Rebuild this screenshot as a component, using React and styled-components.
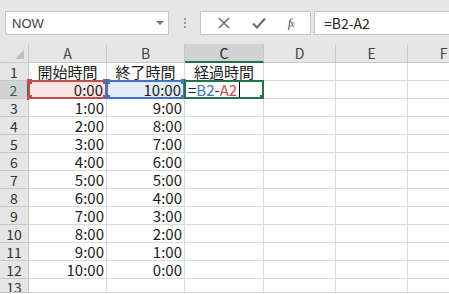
import React from 'react';
import styled, { createGlobalStyle } from 'styled-components';

const GlobalStyle = createGlobalStyle`
  html, body {
    margin: 0;
    padding: 0;
    background: #ffffff;
    overflow: hidden;
  }
  body {
    font-family: "Noto Sans CJK JP", "Noto Sans", sans-serif;
  }
`;

const Window = styled.div`
  width: 449px;
  height: 294px;
  overflow: hidden;
  background: #ffffff;
`;

const Toolbar = styled.div`
  height: 44px;
  background: #e6e6e6;
  display: flex;
  align-items: flex-start;
  padding: 11px 0 0 5px;
  box-sizing: border-box;
`;

const NameBox = styled.div`
  width: 164px;
  height: 24px;
  box-sizing: border-box;
  background: #fff;
  border: 1px solid #c6c6c6;
  display: flex;
  align-items: center;
  justify-content: space-between;
  padding: 0 4px 0 6px;
  font-family: "Liberation Sans", Arial, sans-serif;
  font-size: 13px;
  color: #3c3c3c;
`;

const Arrow = styled.span`
  width: 0;
  height: 0;
  border-left: 4px solid transparent;
  border-right: 4px solid transparent;
  border-top: 4px solid #777;
`;

const Grip = styled.div`
  width: 31px;
  height: 24px;
  display: flex;
  flex-direction: column;
  align-items: center;
  justify-content: center;
  gap: 2px;
  & > span {
    width: 2px;
    height: 2px;
    background: #9a9a9a;
  }
`;

const ActionBox = styled.div`
  width: 111px;
  height: 24px;
  box-sizing: border-box;
  background: #fff;
  border: 1px solid #c6c6c6;
  display: flex;
  align-items: center;
  justify-content: space-around;
  padding: 0 6px;
`;

const Fx = styled.span`
  font-family: "Liberation Serif", serif;
  font-style: italic;
  font-size: 13px;
  color: #555;
  letter-spacing: -1px;
  & > small {
    font-size: 10px;
  }
`;

const FormulaBox = styled.div`
  flex: 1;
  height: 24px;
  margin-left: 3px;
  box-sizing: border-box;
  background: #fff;
  border: 1px solid #c6c6c6;
  border-right: none;
  display: flex;
  align-items: center;
  padding-left: 9px;
  font-family: "Noto Sans CJK JP", sans-serif;
  font-size: 14px;
  color: #222;
`;

const Sheet = styled.div`
  display: grid;
  grid-template-columns: 29px 78px 78px 79px 72px 72px 72px;
  grid-template-rows: 19px repeat(12, 18px) 14px;
`;

const Corner = styled.div`
  background: #e6e6e6;
  border-right: 1px solid #c8c8c8;
  border-bottom: 1px solid #c8c8c8;
  box-sizing: border-box;
  position: relative;
  &::after {
    content: '';
    position: absolute;
    right: 4px;
    bottom: 3px;
    width: 0;
    height: 0;
    border-left: 9px solid transparent;
    border-bottom: 9px solid #bdbdbd;
  }
`;

const ColHead = styled.div`
  background: ${p => (p.active ? '#d2d2d2' : '#e6e6e6')};
  border-right: 1px solid #c8c8c8;
  border-bottom: ${p => (p.active ? '2px solid #217346' : '1px solid #c8c8c8')};
  box-sizing: border-box;
  display: flex;
  align-items: center;
  justify-content: center;
  font-size: 14px;
  color: ${p => (p.active ? '#262626' : '#444')};
  line-height: 16px;
  overflow: hidden;
`;

const RowHead = styled.div`
  background: ${p => (p.active ? '#d2d2d2' : '#e6e6e6')};
  border-right: ${p => (p.active ? '2px solid #217346' : '1px solid #c8c8c8')};
  border-bottom: 1px solid #c8c8c8;
  box-sizing: border-box;
  display: flex;
  align-items: ${p => (p.last ? 'flex-start' : 'center')};
  justify-content: center;
  font-size: 14px;
  color: ${p => (p.active ? '#2f5f45' : '#333')};
  line-height: 16px;
  overflow: hidden;
`;

const Cell = styled.div`
  position: relative;
  box-sizing: border-box;
  border-right: 1px solid #d9d9d9;
  border-bottom: 1px solid #d9d9d9;
  background: ${p => p.fill || '#fff'};
  display: flex;
  align-items: center;
  justify-content: ${p => (p.align === 'right' ? 'flex-end' : p.align === 'center' ? 'center' : 'flex-start')};
  padding: 0 2px;
  font-size: 15px;
  color: #1a1a1a;
  line-height: 16px;
  white-space: nowrap;
  ${p =>
    p.frame &&
    `
    border: 2px solid ${p.frame};
    margin: -1px 0 0 -1px;
    width: calc(100% + 1px);
    height: calc(100% + 1px);
  `}
`;

const Handle = styled.span`
  position: absolute;
  width: 5px;
  height: 5px;
  background: ${p => p.color};
  ${p => (p.top ? 'top: -3px;' : 'bottom: -3px;')}
  ${p => (p.left ? 'left: -3px;' : 'right: -3px;')}
`;

const Ref = styled.span`
  color: ${p => p.color};
`;

const Caret = styled.span`
  display: inline-block;
  width: 1px;
  height: 15px;
  background: #000;
  margin-left: 2px;
`;

const Corners = ({ color, only }) => (
  <>
    {(!only || only.includes('tl')) && <Handle color={color} top left />}
    {(!only || only.includes('tr')) && <Handle color={color} top />}
    {(!only || only.includes('bl')) && <Handle color={color} left />}
    {(!only || only.includes('br')) && <Handle color={color} />}
  </>
);

const starts = ['0:00', '1:00', '2:00', '3:00', '4:00', '5:00', '6:00', '7:00', '8:00', '9:00', '10:00'];
const ends = ['10:00', '9:00', '8:00', '7:00', '6:00', '5:00', '4:00', '3:00', '2:00', '1:00', '0:00'];
const cols = ['A', 'B', 'C', 'D', 'E', 'F'];

const RED = '#c0504d';
const BLUE = '#4472c4';
const GREEN = '#217346';

export default function App() {
  const rows = [];
  for (let r = 1; r <= 13; r++) {
    rows.push(
      <RowHead key={`h${r}`} active={r === 2} last={r === 13}>
        {r}
      </RowHead>
    );
    if (r === 1) {
      rows.push(<Cell key="a1" align="center">開始時間</Cell>);
      rows.push(<Cell key="b1" align="center">終了時間</Cell>);
      rows.push(<Cell key="c1" align="center">経過時間</Cell>);
    } else if (r === 2) {
      rows.push(
        <Cell key="a2" align="right" fill="#fbe4e4" frame={RED}>
          0:00
          <Corners color={RED} />
        </Cell>
      );
      rows.push(
        <Cell key="b2" align="right" fill="#e4ecf7" frame={BLUE}>
          10:00
          <Corners color={BLUE} />
        </Cell>
      );
      rows.push(
        <Cell key="c2" frame={GREEN}>
          =<Ref color={BLUE}>B2</Ref>-<Ref color={RED}>A2</Ref>
          <Caret />
          <Corners color={GREEN} only={['br']} />
        </Cell>
      );
    } else if (r <= 12) {
      rows.push(<Cell key={`a${r}`} align="right">{starts[r - 2]}</Cell>);
      rows.push(<Cell key={`b${r}`} align="right">{ends[r - 2]}</Cell>);
      rows.push(<Cell key={`c${r}`} />);
    } else {
      rows.push(<Cell key={`a${r}`} />);
      rows.push(<Cell key={`b${r}`} />);
      rows.push(<Cell key={`c${r}`} />);
    }
    rows.push(<Cell key={`d${r}`} />);
    rows.push(<Cell key={`e${r}`} />);
    rows.push(<Cell key={`f${r}`} />);
  }

  return (
    <Window>
      <GlobalStyle />
      <Toolbar>
        <NameBox>
          NOW
          <Arrow />
        </NameBox>
        <Grip>
          <span />
          <span />
          <span />
        </Grip>
        <ActionBox>
          <svg width="14" height="14" viewBox="0 0 14 14">
            <path d="M2 2 L12 12 M12 2 L2 12" stroke="#6a6a6a" strokeWidth="1.5" fill="none" />
          </svg>
          <svg width="16" height="14" viewBox="0 0 16 14">
            <path d="M2 7.5 L6 11.5 L14 2.5" stroke="#6a6a6a" strokeWidth="2" fill="none" />
          </svg>
          <Fx>
            f<small>x</small>
          </Fx>
        </ActionBox>
        <FormulaBox>=B2-A2</FormulaBox>
      </Toolbar>
      <Sheet>
        <Corner />
        {cols.map(c => (
          <ColHead key={c} active={c === 'C'}>
            {c}
          </ColHead>
        ))}
        {rows}
      </Sheet>
    </Window>
  );
}
